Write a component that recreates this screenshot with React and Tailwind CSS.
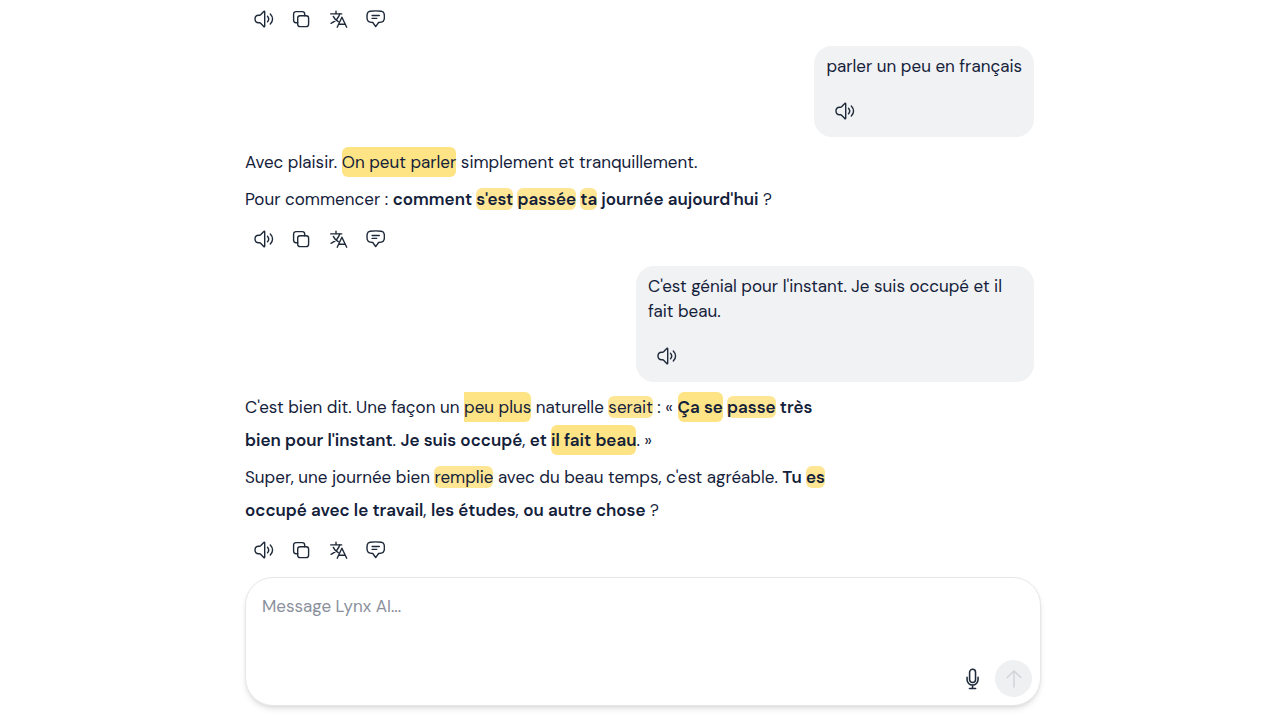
import React, { useState } from "react";

function Icon({ children, className = "size-5" }) {
  return (
    <svg
      viewBox="0 0 20 20"
      fill="none"
      stroke="currentColor"
      strokeWidth="1.4"
      strokeLinecap="round"
      strokeLinejoin="round"
      className={className}
      aria-hidden="true"
    >
      {children}
    </svg>
  );
}

function SpeakerIcon() {
  return (
    <Icon>
      <path d="M10.700 2.700v14.600c0 .5-.6.7-.9.300L6.600 14.200c-.3-.3-.6-.4-1-.4h-1C2.200 13.800 1 12.300 1 10s1.200-3.800 3.600-3.800h1c.4 0 .7-.1 1-.4l3.200-3.400c.3-.4.9-.2.9.3z" />
      <path d="M13.500 7.200c1.400 1.600 1.400 4 0 5.600" />
      <path d="M16.300 4.900c3 3 3 7.200 0 10.200" />
    </Icon>
  );
}

function CopyIcon() {
  return (
    <Icon>
      <rect x="6.700" y="6.700" width="10.900" height="10.900" rx="2.400" />
      <path d="M6.700 13.700H5A2.400 2.400 0 0 1 2.600 11.300V5A2.400 2.400 0 0 1 5 2.600h6.300A2.400 2.400 0 0 1 13.700 5v1.700" />
    </Icon>
  );
}

function TranslateIcon() {
  return (
    <Icon>
      <path d="M8 2.300v2.400M2.700 4.900h11" />
      <path d="M11.700 5c-1.100 4.100-4.200 7.300-8.700 9.300M5.300 7.400c1 2.200 2.700 4 5 5.300" />
      <path d="M9.200 18.200 13.900 8.200l4.800 10M10.700 15.200h6.500" />
    </Icon>
  );
}

function CommentIcon() {
  return (
    <Icon>
      <path d="M5.100 2.300c3.700-.5 7.500-.5 11.200 0 1.500.2 2.500 1 2.800 2.400.4 2 .4 4 0 6-.3 1.400-1.300 2.200-2.800 2.400l-2.700.4-2.900 4.100-2.900-4.100-2.700-.4c-1.500-.2-2.500-1-2.800-2.400-.4-2-.4-4 0-6 .3-1.400 1.300-2.200 2.800-2.400z" />
      <path d="M7.100 6.500h7.200M7.100 9.400h4.600" />
    </Icon>
  );
}

function MicIcon() {
  return (
    <Icon className="size-[22px]">
      <rect x="6.900" y="1.200" width="5.400" height="12" rx="2.700" />
      <path d="M4.600 8.500v2a5 5 0 0 0 10 0v-2M9.600 15.500v3M6.800 18.600h5.600" />
    </Icon>
  );
}

function ArrowUpIcon() {
  return (
    <Icon>
      <path d="M10 18V2M3.200 8.500 10 2l6.800 6.500" />
    </Icon>
  );
}

function IconButton({ label, children }) {
  return (
    <button
      type="button"
      aria-label={label}
      className="flex size-[37px] items-center justify-center rounded-full text-gray-800"
    >
      {children}
    </button>
  );
}

function MessageActions() {
  return (
    <div className="flex">
      <IconButton label="Listen">
        <SpeakerIcon />
      </IconButton>
      <IconButton label="Copy">
        <CopyIcon />
      </IconButton>
      <IconButton label="Translate">
        <TranslateIcon />
      </IconButton>
      <IconButton label="Comment">
        <CommentIcon />
      </IconButton>
    </div>
  );
}

function UserMessage({ children }) {
  return (
    <div className="max-w-[398px] self-end rounded-[18px] bg-[#f1f2f4] px-3 py-2">
      <p className="mb-[13px] leading-[25px]">{children}</p>
      <IconButton label="Listen">
        <SpeakerIcon />
      </IconButton>
    </div>
  );
}

function AssistantMessage({ children }) {
  return (
    <div className="flex max-w-3/4 flex-col gap-1 leading-[33px]">
      {children}
      <MessageActions />
    </div>
  );
}

// saved single word
function Word({ children }) {
  return <mark className="rounded-md bg-[#fee695] text-inherit">{children}</mark>;
}

// saved phrase
function Phrase({ children, className = "rounded-md" }) {
  return <mark className={`bg-[#fee484] py-1 text-inherit ${className}`}>{children}</mark>;
}

function Composer() {
  const [text, setText] = useState("");

  return (
    <form
      onSubmit={(e) => e.preventDefault()}
      className="flex flex-col rounded-[28px] border border-gray-200 bg-white px-2 pb-2 pt-4 shadow-md"
    >
      <textarea
        aria-label="Message"
        value={text}
        onChange={(e) => setText(e.target.value)}
        placeholder="Message Lynx AI..."
        rows={2}
        className="mb-4 resize-none px-2 leading-[25px] outline-none placeholder:text-[#8a909c]"
      />
      <div className="flex justify-end gap-1">
        <IconButton label="Dictate">
          <MicIcon />
        </IconButton>
        <button
          type="submit"
          aria-label="Send"
          className="flex size-[37px] items-center justify-center rounded-full bg-[#eff0f2] text-[#d0d2d6]"
        >
          <ArrowUpIcon />
        </button>
      </div>
    </form>
  );
}

function App() {
  return (
    <main className="min-h-screen bg-white pl-[6px] font-['DM_Sans','Inter',sans-serif] text-[17px] text-[#14213a]">
      <div className="mx-auto max-w-[796px]">
        <div className="flex flex-col gap-[9px] pb-[9px] pr-[7px]">
          <MessageActions />
          <UserMessage>parler un peu en français</UserMessage>
          <AssistantMessage>
            <p>
              Avec plaisir. <Phrase>On peut parler</Phrase> simplement et tranquillement.
            </p>
            <p>
              Pour commencer :{" "}
              <strong className="font-semibold">
                comment <Word>s'est</Word> <Word>passée</Word> <Word>ta</Word> journée aujourd'hui
              </strong>{" "}
              ?
            </p>
          </AssistantMessage>
          <UserMessage>C'est génial pour l'instant. Je suis occupé et il fait beau.</UserMessage>
          <AssistantMessage>
            <p>
              C'est bien dit. Une façon un <Phrase className="rounded-r-md">peu plus</Phrase> naturelle{" "}
              <Word>serait</Word> : «{" "}
              <strong className="font-semibold">
                <Phrase>Ça se</Phrase> <Word>passe</Word> très bien pour l'instant
              </strong>
              . <strong className="font-semibold">Je suis occupé</strong>,{" "}
              <strong className="font-semibold">
                et <Phrase>il fait beau</Phrase>
              </strong>
              . »
            </p>
            <p>
              Super, une journée bien <Word>remplie</Word> avec du beau temps, c'est agréable.{" "}
              <strong className="font-semibold">
                Tu <Word>es</Word> occupé avec le travail
              </strong>
              , <strong className="font-semibold">les études</strong>,{" "}
              <strong className="font-semibold">ou autre chose</strong> ?
            </p>
          </AssistantMessage>
        </div>
        <Composer />
      </div>
    </main>
  );
}

export default App;
